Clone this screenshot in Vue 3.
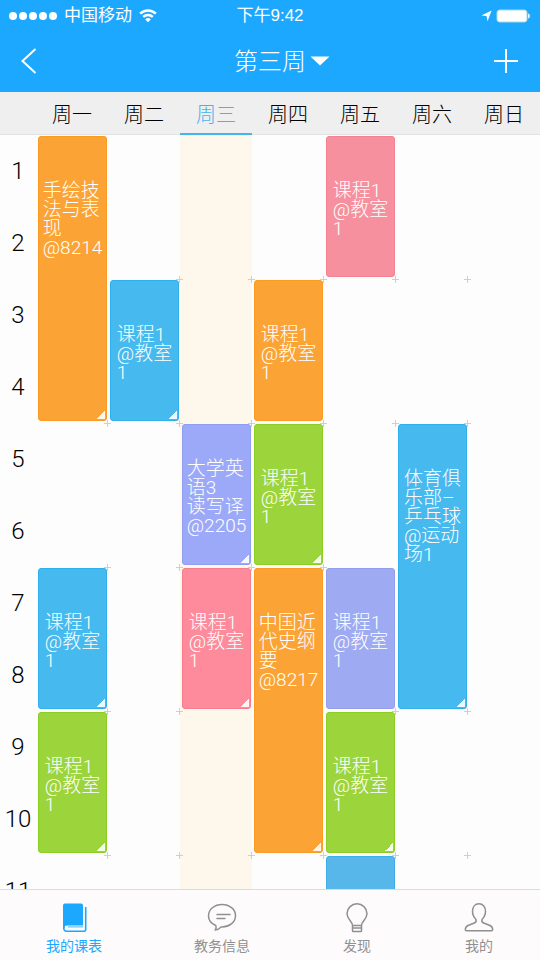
<script setup>
import { ref, computed } from 'vue'

const days = ['周一', '周二', '周三', '周四', '周五', '周六', '周日']
const today = ref(2)
const activeTab = ref('table')
const slots = Array.from({ length: 11 }, (_, i) => i + 1)

const generic = '课程1\n@教室\n1'
const courses = [
  { day: 0, start: 1, span: 4, color: 'orange', text: '手绘技\n法与表\n现\n@8214', corner: true },
  { day: 0, start: 7, span: 2, color: 'blue', text: generic, corner: true },
  { day: 0, start: 9, span: 2, color: 'green', text: generic, corner: true },
  { day: 1, start: 3, span: 2, color: 'blue', text: generic, corner: true },
  { day: 2, start: 5, span: 2, color: 'violet', text: '大学英\n语3\n读写译\n@2205', corner: true },
  { day: 2, start: 7, span: 2, color: 'pink', text: generic, corner: true },
  { day: 3, start: 3, span: 2, color: 'orange', text: generic, corner: false },
  { day: 3, start: 5, span: 2, color: 'green', text: generic, corner: true },
  { day: 3, start: 7, span: 4, color: 'orange', text: '中国近\n代史纲\n要\n@8217', corner: true },
  { day: 4, start: 1, span: 2, color: 'rose', text: generic, corner: false },
  { day: 4, start: 7, span: 2, color: 'lilac', text: generic, corner: false },
  { day: 4, start: 9, span: 2, color: 'green', text: generic, corner: true },
  { day: 4, start: 11, span: 1, color: 'sky', text: '', corner: false },
  { day: 5, start: 5, span: 4, color: 'blue', text: '体育俱\n乐部–\n乒乓球\n@运动\n场1', corner: true }
]

// Crosses sit on the block corners, except beside a course that runs through the block edge.
const marks = computed(() => {
  const list = []
  for (const slot of [2, 4, 6, 8, 10]) {
    for (let day = 0; day < 6; day++) {
      const crossed = courses.some(
        (c) => (c.day === day || c.day === day + 1) && c.start <= slot && c.start + c.span - 1 > slot
      )
      if (!crossed) list.push({ day, slot })
    }
  }
  return list
})

const tabs = [
  { id: 'table', label: '我的课表' },
  { id: 'news', label: '教务信息' },
  { id: 'find', label: '发现' },
  { id: 'me', label: '我的' }
]
</script>

<template>
  <div class="app">
    <header class="top">
      <div class="status">
        <div class="carrier">
          <span class="signal"><i v-for="n in 5" :key="n"></i></span>
          <span>中国移动</span>
          <svg class="wifi" width="18" height="14" viewBox="0 0 18 14" fill="none" stroke="#fff">
            <path d="M1.2 4.6a11.2 11.2 0 0 1 15.6 0" stroke-width="2.6" />
            <path d="M4.2 7.9a6.9 6.9 0 0 1 9.6 0" stroke-width="2.4" />
            <path d="M9 13.2 6.2 10.4a4 4 0 0 1 5.6 0z" fill="#fff" stroke="none" />
          </svg>
        </div>
        <span class="clock">下午9:42</span>
        <div class="power">
          <svg width="11" height="12" viewBox="0 0 11 12"><path d="M10.6.6 6.6 11.2 5.5 6.1.4 5.5z" fill="#fff" /></svg>
          <svg width="35" height="14" viewBox="0 0 35 14">
            <rect x="1" y="1" width="30" height="12" rx="2.5" fill="#fff" stroke="#a5dcdc" />
            <path d="M32 4.5c2.6.4 2.6 4.6 0 5z" fill="#e4f6f8" />
          </svg>
        </div>
      </div>
      <div class="nav">
        <button class="icon-button" type="button" aria-label="返回">
          <svg width="18" height="28" viewBox="0 0 18 28" fill="none" stroke="#fff" stroke-width="2"><path d="M14.5 2 1.500 14l13 12" /></svg>
        </button>
        <button class="week" type="button">
          <span>第三周</span>
          <svg width="20" height="10" viewBox="0 0 20 10"><path d="M.5.5h19L10 9.5z" fill="#fff" /></svg>
        </button>
        <button class="icon-button add" type="button" aria-label="添加">
          <svg width="26" height="26" viewBox="0 0 26 26" stroke="#fff" stroke-width="2"><path d="M13 1v24M1 13h24" /></svg>
        </button>
      </div>
    </header>

    <div class="days">
      <button
        v-for="(d, i) in days"
        :key="d"
        type="button"
        :class="['day', { current: i === today }]"
        :style="{ gridColumn: i + 2 }"
        @click="today = i"
      >{{ d }}</button>
    </div>

    <main class="scroller">
      <div class="schedule">
        <div class="highlight" :style="{ gridColumn: today + 2 }"></div>
        <span v-for="s in slots" :key="s" class="slot" :style="{ gridRow: s }">{{ s }}</span>
        <i
          v-for="m in marks"
          :key="m.day + '-' + m.slot"
          class="mark"
          :style="{ gridColumn: m.day + 2, gridRow: m.slot }"
        ></i>
        <article
          v-for="c in courses"
          :key="c.day + '-' + c.start"
          :class="['course', c.color, { long: c.span > 2, corner: c.corner }]"
          :style="{ gridColumn: c.day + 2, gridRow: c.start + ' / span ' + c.span }"
        >
          <p v-if="c.text">{{ c.text }}</p>
        </article>
      </div>
    </main>

    <nav class="tabs">
      <a
        v-for="t in tabs"
        :key="t.id"
        href="#"
        :class="['tab', { active: t.id === activeTab }]"
        @click.prevent="activeTab = t.id"
      >
        <svg v-if="t.id === 'table'" width="30" height="30" viewBox="0 0 30 30">
          <path d="M5.8.6h16.400A1.800 1.800 0 0 1 24 2.400V22.600H8c-1.500 0-2.500.8-2.500 2.500H4V2.400A1.800 1.800 0 0 1 5.8.6z" fill="currentColor" />
          <path d="M4.800 24v1.500a2.700 2.700 0 0 0 2.700 2.700h17.800a1.400 1.400 0 0 0 1.400-1.400V4" fill="none" stroke="currentColor" stroke-width="1.600" />
          <path d="M24 23.900H9" stroke="currentColor" stroke-width="0.800" />
        </svg>
        <svg v-else-if="t.id === 'news'" width="30" height="30" viewBox="0 0 30 30" fill="none" stroke="currentColor" stroke-width="1.5" stroke-linecap="round" stroke-linejoin="round">
          <path d="M15 1.5C7.500 1.500 1.500 6.500 1.500 12.700c0 4.300 2.500 7.800 7.300 9.800.7 1.800.3 3.300-.7 4.600 2.500-.3 4.500-1.300 6-3.200 8.100.4 14.400-4.800 14.400-11.200S22.500 1.500 15 1.500z" />
          <path d="M10 11.500h13M10 15.500h8" />
        </svg>
        <svg v-else-if="t.id === 'find'" width="30" height="30" viewBox="0 0 30 30" fill="none" stroke="currentColor" stroke-width="1.5" stroke-linejoin="round">
          <path d="M10.500 22.500c0-4.500-5.500-6-5.500-12A10 10 0 0 1 15 .8a10 10 0 0 1 10 9.700c0 6-5.500 7.500-5.500 12zM10.500 22.500v5.200a.8.8 0 0 0 .8.8h7.400a.8.8 0 0 0 .8-.8v-5.200M10.500 25h9" />
        </svg>
        <svg v-else width="30" height="30" viewBox="0 0 30 30" fill="none" stroke="currentColor" stroke-width="1.5" stroke-linejoin="round">
          <path d="M15 .8c-4 0-6.500 3.200-6.500 7.500 0 3.300 1.300 6 3.500 8.200.5 1.500 0 2.800-1.700 3.500L4 22.500c-1.800.8-2.700 2.300-2.700 4.200 0 .7.500 1 1.200 1h25c.7 0 1.200-.3 1.200-1 0-1.900-.9-3.400-2.700-4.200L19.700 20c-1.700-.7-2.200-2-1.700-3.500 2.200-2.200 3.500-4.900 3.500-8.200C21.500 4 19 .8 15 .8z" />
        </svg>
        <span>{{ t.label }}</span>
      </a>
    </nav>
  </div>
</template>

<style>
body {
  background: #fdfdfd;
}
</style>

<style scoped>
.app {
  display: flex;
  flex-direction: column;
  height: 100vh;
  overflow: hidden;
  font-family: Roboto, "Noto Sans CJK SC", sans-serif;
  color: #1c1c1c;
}
button {
  padding: 0;
  border: 0;
  background: none;
  color: inherit;
  font: inherit;
  cursor: pointer;
}
svg {
  display: block;
  flex: none;
}
p {
  margin: 0;
}
.top {
  flex: none;
  background: #1ca8ff;
  color: #fff;
}
.status {
  display: grid;
  grid-template-columns: 1fr auto 1fr;
  align-items: center;
  height: 30px;
  padding: 0 9px;
  font: 17px/32px "Liberation Sans", "Noto Sans CJK SC", sans-serif;
}
.carrier {
  display: flex;
  align-items: center;
  gap: 7px;
}
.signal {
  display: flex;
  gap: 2px;
}
.signal i {
  width: 8px;
  height: 8px;
  border-radius: 50%;
  background: #fff;
}
.power {
  display: flex;
  align-items: center;
  justify-content: flex-end;
  gap: 4px;
}
.nav {
  display: grid;
  grid-template-columns: 1fr auto 1fr;
  align-items: center;
  height: 62px;
  padding: 0 21px;
}
.icon-button {
  justify-self: start;
}
.add {
  justify-self: end;
}
.week {
  display: flex;
  align-items: center;
  gap: 4px;
  font-size: 24px;
  line-height: 36px;
  font-weight: 300;
}
.week span {
  padding-top: 2px;
}
.week svg {
  margin-right: -24px;
}
.days,
.schedule {
  display: grid;
  grid-template-columns: 1fr repeat(7, 2fr);
}
.days {
  flex: none;
  height: 43px;
  box-sizing: border-box;
  background: #efefef;
  border-bottom: 1px solid #e2e2e2;
}
.day {
  height: 43px;
  box-sizing: border-box;
  padding-top: 6px;
  border-bottom: 2px solid transparent;
  font-size: 20px;
  line-height: 35px;
  font-weight: 300;
  color: #000;
}
.day.current {
  color: #45b4ee;
  border-bottom-color: #45b4ee;
}
.scroller {
  flex: 1;
  min-height: 0;
  overflow-y: auto;
  scrollbar-width: none;
}
.schedule {
  grid-template-rows: repeat(11, 72px);
}
.highlight {
  grid-row: 1 / -1;
  background: #fef7eb;
}
.slot {
  grid-column: 1;
  align-self: center;
  text-align: center;
  font-size: 24px;
  line-height: 28px;
  font-weight: 300;
  color: #000;
}
.mark {
  justify-self: end;
  align-self: end;
  width: 7px;
  height: 7px;
  margin: 0 -3px -4px 0;
  background:
    linear-gradient(#cfcfcf, #cfcfcf) center / 7px 1px no-repeat,
    linear-gradient(#cfcfcf, #cfcfcf) center / 1px 7px no-repeat;
}
.course {
  position: relative;
  display: flex;
  align-items: center;
  justify-content: center;
  margin: 1px 1px 2px 2px;
  padding-top: 5px;
  border: 1px solid;
  border-radius: 3px;
  color: #fff;
}
.course.long {
  align-items: flex-start;
  padding-top: 44px;
}
.course p {
  white-space: pre;
  font-size: 19px;
  line-height: 19px;
  font-weight: 300;
}
.corner::after {
  content: "";
  position: absolute;
  right: 1px;
  bottom: 1px;
  width: 8px;
  height: 8px;
  background: linear-gradient(135deg, transparent 50%, rgba(255, 255, 255, 0.9) 50%);
}
.orange { background: #fba334; border-color: #fb9b24; }
.blue { background: #46b9ee; border-color: #2fb0ec; }
.green { background: #9bd53b; border-color: #8ccf22; }
.violet { background: #9ca9f8; border-color: #8f9df2; }
.lilac { background: #9eaaf2; border-color: #929fee; }
.pink { background: #fd8b9b; border-color: #f87c8e; }
.rose { background: #f6909e; border-color: #f58292; }
.sky { background: #58b7ea; border-color: #41ade6; }
.tabs {
  flex: none;
  display: flex;
  justify-content: space-between;
  height: 71px;
  box-sizing: border-box;
  padding: 13px 46px 0;
  border-top: 1px solid #dcdcdc;
  background: #fdfbfc;
}
.tab {
  display: flex;
  flex-direction: column;
  align-items: center;
  gap: 3px;
  color: #909090;
  font-size: 14px;
  line-height: 20px;
  text-decoration: none;
}
.tab.active {
  color: #1ca8ff;
}
</style>
